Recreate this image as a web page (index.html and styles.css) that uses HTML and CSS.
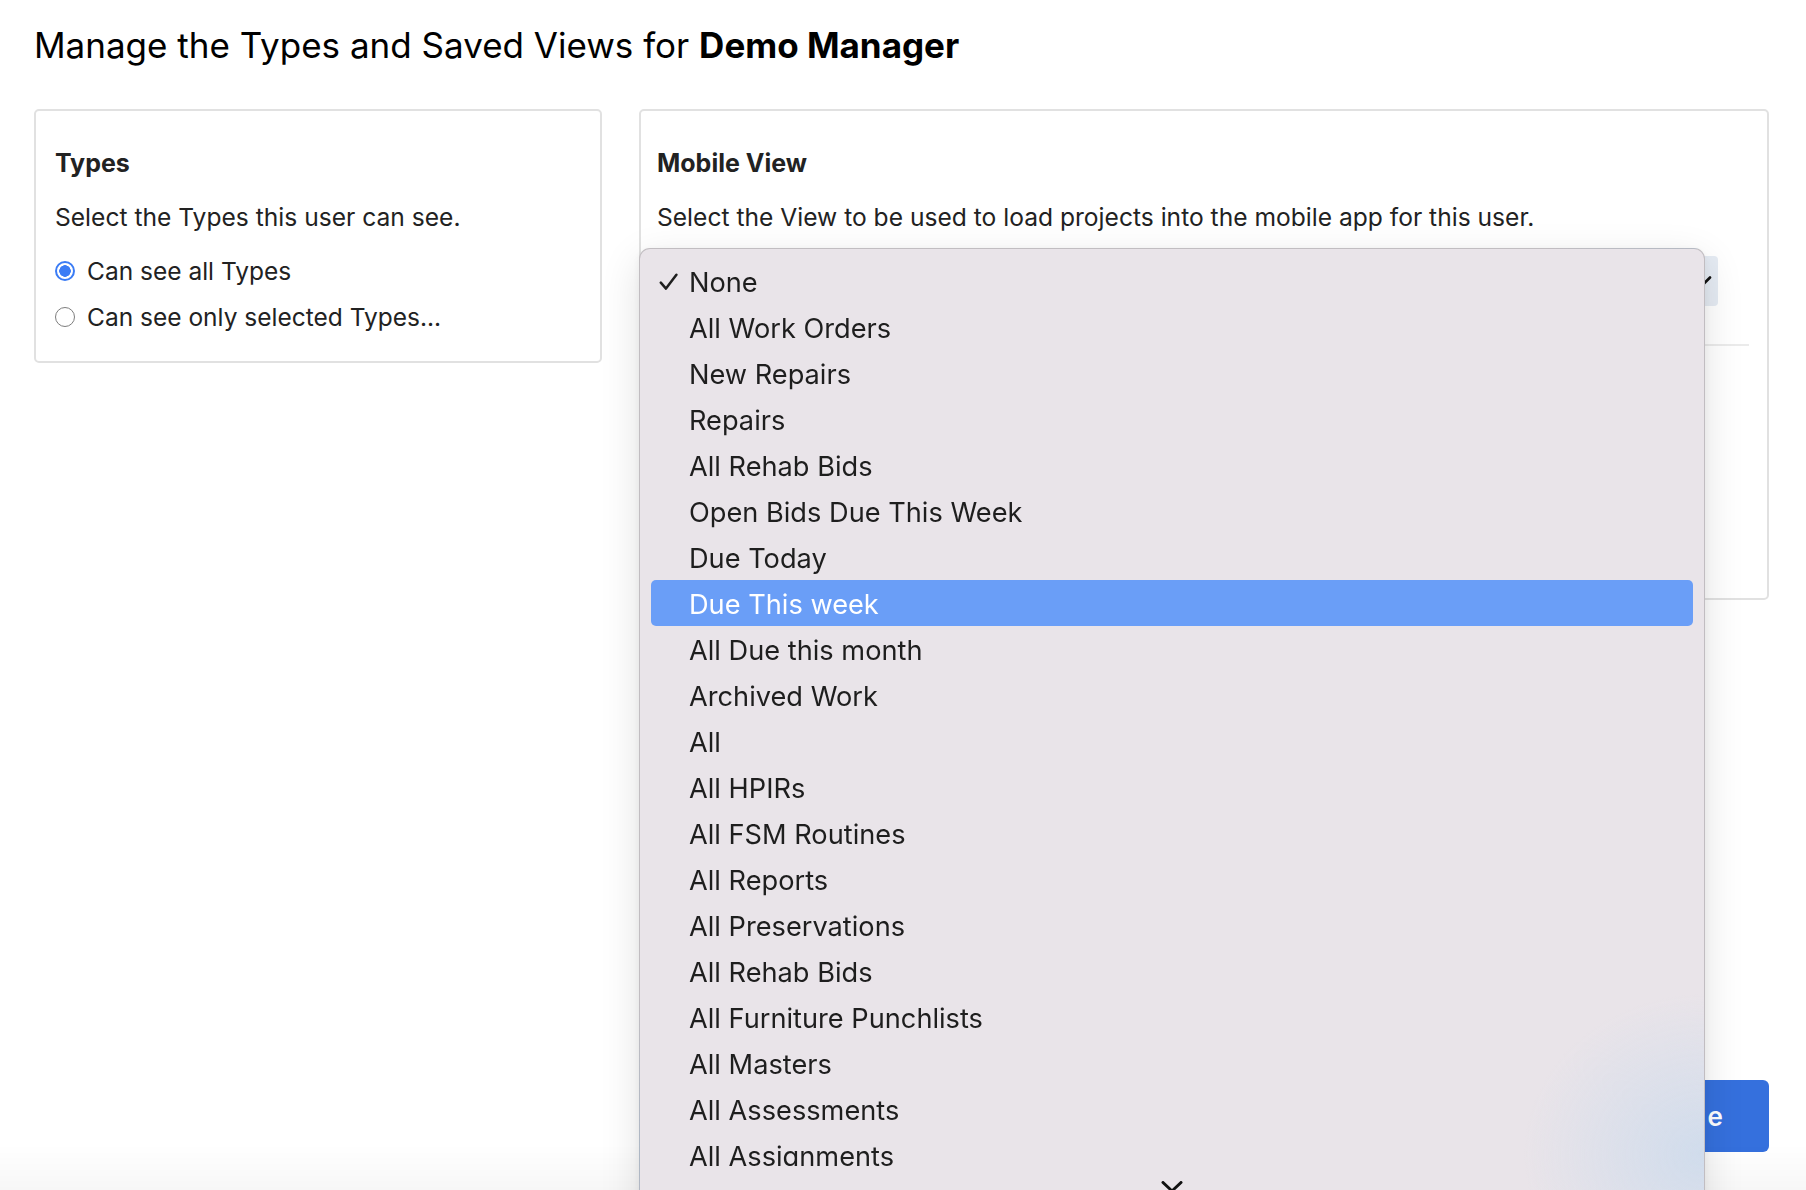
FILE: index.html
```html
<!DOCTYPE html>
<html lang="en">
<head>
<meta charset="utf-8">
<title>Manage Types and Saved Views</title>
<link rel="stylesheet" href="styles.css">
</head>
<body>
<main class="page">
  <h1 class="title">Manage the Types and Saved Views for <strong>Demo Manager</strong></h1>

  <div class="columns">
    <section class="card types-card">
      <h2 class="card-heading">Types</h2>
      <p class="card-desc">Select the Types this user can see.</p>
      <div class="radio-list">
        <label class="radio-row"><input type="radio" name="types" checked><span>Can see all Types</span></label>
        <label class="radio-row"><input type="radio" name="types"><span>Can see only selected Types...</span></label>
      </div>
    </section>

    <section class="card view-card">
      <h2 class="card-heading">Mobile View</h2>
      <p class="card-desc">Select the View to be used to load projects into the mobile app for this user.</p>
      <div class="select">
        <span>None</span>
        <svg class="select-chevron" width="18" height="10" viewBox="0 0 18 10"><path d="M2 1.5 L9 8.5 L16 1.5" fill="none" stroke="#111" stroke-width="2.6" stroke-linecap="round" stroke-linejoin="round"/></svg>
      </div>
      <hr class="divider">
      <div class="saved-views">
        <h2 class="card-heading">Saved Views</h2>
        <p class="card-desc">Select the Views this user can see.</p>
        <div class="radio-list">
          <label class="radio-row"><input type="radio" name="views" checked><span>All Views</span></label>
          <label class="radio-row"><input type="radio" name="views"><span>Selected Views</span></label>
        </div>
      </div>

      <div class="menu" role="listbox">
        <ul class="menu-list">
          <li class="menu-item is-checked"><span class="check"><svg width="19" height="18" viewBox="0 0 19 18"><path d="M1.8 9.6 L7 15.6 L17.4 1.8" fill="none" stroke="#1f1f1f" stroke-width="2.5" stroke-linecap="round" stroke-linejoin="round"/></svg></span>None</li>
          <li class="menu-item"><span class="check"></span>All Work Orders</li>
          <li class="menu-item"><span class="check"></span>New Repairs</li>
          <li class="menu-item"><span class="check"></span>Repairs</li>
          <li class="menu-item"><span class="check"></span>All Rehab Bids</li>
          <li class="menu-item"><span class="check"></span>Open Bids Due This Week</li>
          <li class="menu-item"><span class="check"></span>Due Today</li>
          <li class="menu-item is-active"><span class="check"></span>Due This week</li>
          <li class="menu-item"><span class="check"></span>All Due this month</li>
          <li class="menu-item"><span class="check"></span>Archived Work</li>
          <li class="menu-item"><span class="check"></span>All</li>
          <li class="menu-item"><span class="check"></span>All HPIRs</li>
          <li class="menu-item"><span class="check"></span>All FSM Routines</li>
          <li class="menu-item"><span class="check"></span>All Reports</li>
          <li class="menu-item"><span class="check"></span>All Preservations</li>
          <li class="menu-item"><span class="check"></span>All Rehab Bids</li>
          <li class="menu-item"><span class="check"></span>All Furniture Punchlists</li>
          <li class="menu-item"><span class="check"></span>All Masters</li>
          <li class="menu-item"><span class="check"></span>All Assessments</li>
          <li class="menu-item"><span class="check"></span>All Assignments</li>
          <li class="menu-item"><span class="check"></span>All Inspections</li>
        </ul>
        <div class="menu-scroll">
          <svg width="22" height="12" viewBox="0 0 22 12"><path d="M2 1.5 L11 10 L20 1.5" fill="none" stroke="#111" stroke-width="3" stroke-linecap="round" stroke-linejoin="round"/></svg>
        </div>
      </div>
    </section>
  </div>

  <div class="actions">
    <button class="save-btn" type="button">Save</button>
  </div>
</main>
</body>
</html>
```

FILE: styles.css
```css
html, body {
  margin: 0;
  height: 100%;
  overflow: hidden;
  background: #fff;
}

body {
  font-family: Inter, "Noto Sans", sans-serif;
  color: #222;
}

body::after {
  content: "";
  position: fixed;
  left: 0;
  right: 0;
  bottom: 0;
  height: 46px;
  background: linear-gradient(rgba(0, 0, 0, 0), rgba(0, 0, 0, 0.03));
  pointer-events: none;
  z-index: 1;
}

.page {
  padding: 25px 37px 0 34px;
}

.title {
  margin: 0;
  font-size: 35px;
  line-height: 40px;
  font-weight: 400;
  color: #000;
}

.title strong {
  font-weight: 700;
}

.columns {
  display: grid;
  grid-template-columns: 568px 1fr;
  gap: 37px;
  margin-top: 44px;
  align-items: start;
}

.card {
  border: 2px solid #e1e1e1;
  border-radius: 5px;
  padding: 37px 18px 21px;
  background: #fff;
}

.types-card {
  padding-left: 19px;
}

.card-heading {
  margin: 0;
  font-size: 25px;
  line-height: 30px;
  font-weight: 700;
  color: #222;
}

.card-desc {
  margin: 22px 0 0;
  font-size: 24.6px;
  line-height: 34px;
  color: #222;
}

.radio-list {
  margin-top: 14px;
  display: flex;
  flex-direction: column;
}

.radio-row {
  display: flex;
  align-items: center;
  gap: 12px;
  height: 46px;
  font-size: 24.5px;
  color: #222;
}

.radio-row input {
  appearance: none;
  -webkit-appearance: none;
  box-sizing: border-box;
  width: 20px;
  height: 20px;
  margin: 0;
  border-radius: 50%;
  border: 1px solid #7d7d7d;
  background: #fff;
  flex: none;
}

.radio-row input:checked {
  border: 2px solid #3b7cf5;
  background: radial-gradient(circle, #3b7cf5 0 5.5px, #fff 6px);
}

.view-card {
  position: relative;
  padding-left: 16px;
}

.select {
  margin-top: 22px;
  height: 50px;
  width: calc(100% - 31px);
  box-sizing: border-box;
  background: #e5ebf3;
  border-radius: 4px;
  display: flex;
  align-items: center;
  justify-content: space-between;
  padding: 0 6px 0 14px;
  font-size: 24px;
}

.divider {
  margin: 38px 0 0;
  border: 0;
  border-top: 2px solid #ebebeb;
}

.saved-views {
  padding-top: 36px;
  padding-bottom: 3px;
}

.menu {
  position: absolute;
  left: -2px;
  top: 137px;
  width: 1066px;
  box-sizing: border-box;
  border: 1px solid rgba(0, 0, 0, 0.17);
  border-radius: 11px;
  background-color: #e9e4e9;
  background-image: radial-gradient(ellipse 180px 160px at 100% 905px, rgba(208, 220, 236, 1), rgba(233, 228, 233, 0));
  box-shadow: 0 12px 40px rgba(0, 0, 0, 0.12), 0 2px 10px rgba(0, 0, 0, 0.06);
  padding-top: 9px;
  z-index: 5;
}

.menu-list {
  list-style: none;
  margin: 0;
  padding: 0;
  height: 908px;
  overflow: hidden;
}

.menu-item {
  display: flex;
  align-items: center;
  box-sizing: border-box;
  height: 46px;
  margin: 0 11px;
  padding: 2px 0 0 8px;
  border-radius: 5px;
  font-size: 27.2px;
  color: #1e1e1e;
  white-space: nowrap;
}

.menu-item.is-active {
  background: #6a9ef7;
  color: #fff;
}

.check {
  width: 30px;
  flex: none;
  display: flex;
  align-items: center;
}

.menu-scroll {
  height: 40px;
  display: flex;
  justify-content: center;
  align-items: flex-start;
  padding-top: 15px;
}

.actions {
  display: flex;
  justify-content: flex-end;
  margin-top: 480px;
}

.save-btn {
  height: 72px;
  padding: 0 43px 0 46px;
  border: 0;
  border-radius: 6px;
  background: #3570dd;
  color: #fff;
  font-family: Inter, "Noto Sans", sans-serif;
  font-size: 26px;
  font-weight: 600;
  letter-spacing: 3px;
}
```
